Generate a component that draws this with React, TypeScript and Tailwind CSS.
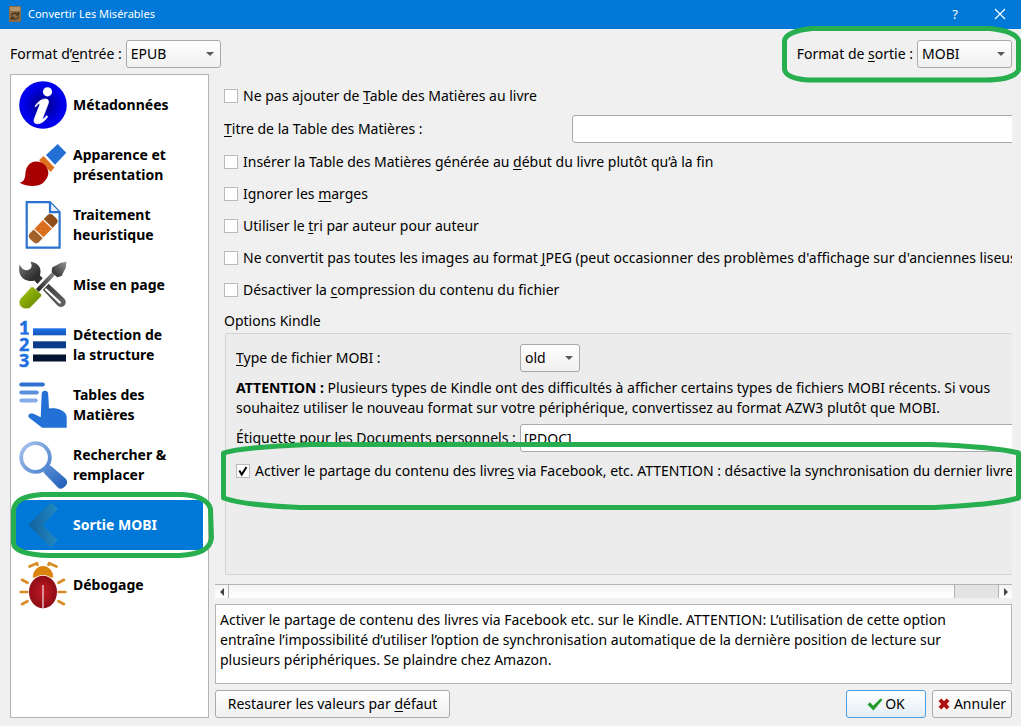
import type { ReactNode } from "react";

/** Renders a caption, underlining the character that follows "&" (its access key). */
function Caption({ text }: { text: string }) {
  const at = text.indexOf("&");
  if (at < 0) return <>{text}</>;
  return (
    <>
      {text.slice(0, at)}
      <u className="underline decoration-1 underline-offset-2">{text[at + 1]}</u>
      {text.slice(at + 2)}
    </>
  );
}

function InfoIcon() {
  return (
    <svg viewBox="0 0 48 48" className="size-12 shrink-0" aria-hidden="true">
      <defs>
        <radialGradient id="info">
          <stop offset="0" stopColor="#00007c" />
          <stop offset="0.85" stopColor="#0000f0" />
          <stop offset="1" stopColor="#0000e6" />
        </radialGradient>
      </defs>
      <circle cx="24" cy="24" r="23.8" fill="url(#info)" />
      <circle cx="28.5" cy="10.8" r="4.6" fill="#fff" />
      <path
        fill="#fff"
        stroke="#fff"
        strokeWidth=".8"
        d="M16 25.500c2.500-4.500 6.500-7.500 10.500-7.500 2.800 0 3.500 2 2.700 4.600l-5.400 14c-.5 1.500.2 1.700 1.200.9 1-.8 1.800-1.800 2.500-2.800l1.200 1c-2.600 4-6.500 7-10.300 7-3.200 0-3.900-2.300-3-5l5.300-13.600c.5-1.500-.5-1.800-1.600-1-.8.6-1.500 1.500-2 2.400z"
      />
    </svg>
  );
}

function BrushIcon() {
  return (
    <svg viewBox="0 0 48 48" className="size-12 shrink-0" aria-hidden="true">
      <path fill="#2370d4" d="M38.700 3l8.600 8.700-11.300 12-9-9.700z" />
      <path fill="#dc701f" d="M24.500 15L35.500 26.500 31.600 31 20 19.300z" />
      <path
        fill="#a80000"
        d="M.7 41.700c4-.7 5.300-4 5.700-8.700.4-6.500 3.600-12.200 10.600-12.500 6.500-.2 11.500 4.500 12.300 10.500.5 4-2 7.500-5.300 11-4.500 3.700-15.500 4.200-23.300-.3z"
      />
    </svg>
  );
}

function BandageIcon() {
  return (
    <svg viewBox="0 0 48 48" className="size-12 shrink-0" aria-hidden="true">
      <defs>
        <linearGradient id="bandage">
          <stop offset="0" stopColor="#a5652c" />
          <stop offset="1" stopColor="#8a4a18" />
        </linearGradient>
      </defs>
      <path fill="#fff" stroke="#2b72d0" strokeWidth="2.200" d="M7.700 1.200h23.200l9.700 10v35.500H7.700z" />
      <path fill="#e8f0fc" stroke="#2b72d0" strokeWidth="2.200" d="M31 1.500v9.700h9.500" />
      <g transform="rotate(-46 24 27.500)">
        <rect x="7.500" y="21.500" width="33" height="12.500" rx="4" fill="url(#bandage)" />
        <rect x="16.800" y="21" width="14.400" height="13.500" fill="#fff" />
        <rect x="18" y="21.500" width="12" height="12.500" fill="#dd7020" />
        <g fill="#c35f1a">
          <circle cx="21.500" cy="25" r=".8" />
          <circle cx="26.500" cy="25" r=".8" />
          <circle cx="24" cy="27.700" r=".8" />
          <circle cx="21.500" cy="30.500" r=".8" />
          <circle cx="26.500" cy="30.500" r=".8" />
        </g>
      </g>
    </svg>
  );
}

function ToolsIcon() {
  return (
    <svg viewBox="0 0 48 48" className="size-12 shrink-0" aria-hidden="true">
      <defs>
        <linearGradient id="wrench" x1="0" y1="0" x2="1" y2="1">
          <stop offset="0" stopColor="#777" />
          <stop offset="0.35" stopColor="#2c2c2c" />
          <stop offset="1" stopColor="#666" />
        </linearGradient>
        <linearGradient id="driver" x1="1" y1="0" x2="0" y2="1">
          <stop offset="0" stopColor="#999" />
          <stop offset="1" stopColor="#1c1c1c" />
        </linearGradient>
        <linearGradient id="handle" x1="0" y1="0" x2="1" y2="1">
          <stop offset="0" stopColor="#a9cc0c" />
          <stop offset="1" stopColor="#5d7d00" />
        </linearGradient>
      </defs>
      <path
        fill="url(#wrench)"
        d="M.8 3.500c1.500 4 4.500 6.500 8 5.500 4-1.200 5-4.500 2.500-8.300 6 .3 10.200 4.300 10.200 9.300 0 1.700-.2 3-.6 4.500l24.300 23c2.300 2.400 1.800 5.500 0 7.200-2 1.700-5 1.600-7-.5L15.300 19.500c-1.500.5-3 .6-4.800.4C5 19.400.500 15 .2 9.700 0 7.300.2 5.300.8 3.500z"
      />
      <path fill="none" stroke="#fff" strokeWidth="2.400" d="M27 28.500l13.800 13" strokeLinecap="round" />
      <path stroke="#fff" strokeWidth="8" d="M16 31.500L36 10" />
      <path stroke="url(#driver)" strokeWidth="4" d="M17 31L37.500 9.500" />
      <path fill="url(#driver)" d="M47.500.8l-6 1.200-8.400 4.500-.4 4.500 5.500 5.300 4.400-1.200 4.200-8.400z" />
      <path
        fill="url(#handle)"
        stroke="#fff"
        strokeWidth=".6"
        d="M12 26.300c1-.8 1.700-.6 2.500 0l7.600 6.700c.8.8.6 1.700 0 2.600L11.500 46.500c-2.500 2-7 1.700-9.500-.7-2.300-2.300-2.600-6 0-8.800z"
      />
    </svg>
  );
}

function NumberedListIcon() {
  return (
    <svg viewBox="0 0 48 48" className="size-12 shrink-0 overflow-visible" aria-hidden="true">
      <defs>
        <linearGradient id="num" x1="0" y1="0" x2="0" y2="1">
          <stop offset="0" stopColor="#1e74ea" />
          <stop offset="1" stopColor="#1554b8" />
        </linearGradient>
      </defs>
      <g fill="#1e6fe0" stroke="#1e6fe0" strokeWidth=".4" fontFamily="'Noto Sans'" fontWeight="700" fontSize="18">
        <text x="0" y="13.300">1</text>
        <text x="0" y="29.700">2</text>
        <text x="0" y="46">3</text>
      </g>
      <rect x="14" y="7.300" width="33" height="7" fill="url(#num)" />
      <rect x="14" y="20.300" width="33" height="7" fill="#0b3c8a" />
      <rect x="14" y="33.500" width="33" height="7" fill="#031432" />
      <path stroke="#1e6fe0" strokeWidth="2.200" d="M1.500 12.500h8.500" />
    </svg>
  );
}

function PointerIcon() {
  return (
    <svg viewBox="0 0 48 48" className="size-12 shrink-0" aria-hidden="true">
      <g strokeWidth="4" strokeLinecap="round">
        <path stroke="#2f70d0" d="M2.300 3.500h21.500" />
        <path stroke="#5b90dd" d="M2.300 11.500h15.500" />
        <path stroke="#86adea" d="M2.300 19.500h14.500" />
      </g>
      <path
        fill="#2370d6"
        d="M22.700 13c0-4.400 6.500-4.400 6.500 0l.8 14.500c5-.5 8.800 0 12 1.500 3.500 1.700 5.700 4 5.700 7.500v10.200H23.200L10.500 37c-2.200-1.700-.9-4.800 2-4.500 1.400.1 2.300.3 3.500.9l5.700 2.800z"
      />
    </svg>
  );
}

function MagnifierIcon() {
  return (
    <svg viewBox="0 0 48 48" className="size-12 shrink-0" aria-hidden="true">
      <defs>
        <linearGradient id="lens" x1="0" y1="0" x2="1" y2="1">
          <stop offset="0" stopColor="#a9c4ec" />
          <stop offset="1" stopColor="#4780cc" />
        </linearGradient>
        <linearGradient id="grip" x1="0" y1="0" x2="1" y2="1">
          <stop offset="0" stopColor="#5c90d6" />
          <stop offset="1" stopColor="#1d5bb8" />
        </linearGradient>
      </defs>
      <circle cx="16.500" cy="16.500" r="14.300" fill="#fff" stroke="url(#lens)" strokeWidth="3.800" />
      <path fill="url(#grip)" d="M24.500 31.500l1-4.300 2-1.800 4-.8L46.500 37.500c2 2 2.200 4.700.3 7.100-2.300 3-5.600 4.200-7.900 1.900z" />
    </svg>
  );
}

function ChevronIcon() {
  return (
    <svg viewBox="0 0 48 48" className="size-12 shrink-0" aria-hidden="true">
      <defs>
        <linearGradient id="chev">
          <stop offset="0" stopColor="#12619b" />
          <stop offset="1" stopColor="#2289c3" />
        </linearGradient>
      </defs>
      <path fill="url(#chev)" d="M32 1.300L39 8 23.700 24l14.900 15.500-7 7.200L9.700 24z" />
    </svg>
  );
}

function BugIcon() {
  return (
    <svg viewBox="0 0 48 48" className="size-12 shrink-0" aria-hidden="true">
      <defs>
        <radialGradient id="bug">
          <stop offset="0" stopColor="#c01a24" />
          <stop offset="1" stopColor="#8f0d16" />
        </radialGradient>
      </defs>
      <g fill="none" stroke="#d98b26" strokeWidth="2.700" strokeLinecap="round" strokeLinejoin="round">
        <path d="M10.500 5.500l7.500-3.300.5 1.600M37.500 5.500L30 2.200l-.5 1.600" />
        <path d="M3 18.800l5.500 3M45 18.800l-5.500 3M1.700 31h6.800M46.300 31h-6.800M3 43.200l5.500-3M45 43.200l-5.500-3" />
      </g>
      <path fill="#dc850e" d="M13.700 16.500a10.300 11.500 0 0 1 20.600 0z" />
      <ellipse cx="24" cy="31" rx="14.500" ry="17" fill="#fff" />
      <ellipse cx="24" cy="31" rx="14" ry="16.300" fill="url(#bug)" />
      <path stroke="#e6b9bb" strokeWidth="1.500" d="M24 24v23.500" />
    </svg>
  );
}

function AppIcon() {
  return (
    <svg viewBox="0 0 12 16" className="h-4 w-3 shrink-0" aria-hidden="true">
      <rect width="12" height="16" rx="1" fill="#8c6a42" />
      <rect x="1" y="1" width="10" height="4" fill="#b09468" />
      <g fill="none" stroke="#3a2f20" strokeWidth="1.200">
        <path d="M2.300 9.500C2.800 7 7 6 9 8.500M9.500 6v3H6.700M9.700 10.700c-.5 2.500-4.700 3.300-6.700 1M2.500 14v-2.700h2.700" />
      </g>
    </svg>
  );
}

interface Section {
  lines: string[];
  icon: ReactNode;
  active?: boolean;
}

const sections: Section[] = [
  { lines: ["Métadonnées"], icon: <InfoIcon /> },
  { lines: ["Apparence et", "présentation"], icon: <BrushIcon /> },
  { lines: ["Traitement", "heuristique"], icon: <BandageIcon /> },
  { lines: ["Mise en page"], icon: <ToolsIcon /> },
  { lines: ["Détection de", "la structure"], icon: <NumberedListIcon /> },
  { lines: ["Tables des", "Matières"], icon: <PointerIcon /> },
  { lines: ["Rechercher &", "remplacer"], icon: <MagnifierIcon /> },
  { lines: ["Sortie MOBI"], icon: <ChevronIcon />, active: true },
  { lines: ["Débogage"], icon: <BugIcon /> },
];

const outputOptions = [
  { id: "start", text: "Insérer la Table des Matières générée au &début du livre plutôt qu’à la fin" },
  { id: "margins", text: "Ignorer les &marges" },
  { id: "sort", text: "Utiliser le &tri par auteur pour auteur" },
  {
    id: "jpeg",
    text: "Ne convertit pas toutes les images au format &JPEG (peut occasionner des problèmes d'affichage sur d'anciennes liseuses)",
  },
  { id: "compress", text: "Désactiver la &compression du contenu du fichier" },
];

function CheckRow({ id, text, checked = false }: { id: string; text: string; checked?: boolean }) {
  return (
    <div className="flex h-[26px] items-center gap-[5px]">
      <span className="relative size-3.5 shrink-0">
        <input
          id={id}
          type="checkbox"
          defaultChecked={checked}
          className="peer block size-3.5 appearance-none border border-[#b9b9b9] bg-white"
        />
        <svg
          viewBox="0 0 14 14"
          className="pointer-events-none absolute inset-0 hidden size-3.5 peer-checked:block"
          aria-hidden="true"
        >
          <path fill="none" stroke="#000" strokeWidth="2" d="M3.300 6.500l2.400 4L10.500 3" />
        </svg>
      </span>
      <label htmlFor={id}>
        <Caption text={text} />
      </label>
    </div>
  );
}

function Dropdown({ id, value, className }: { id: string; value: string; className: string }) {
  return (
    <div className={`relative h-7 ${className}`}>
      <select
        id={id}
        defaultValue={value}
        className="h-full w-full appearance-none rounded-[3px] border border-[#a9a9a9] bg-linear-to-b from-white to-[#f0f0f0] pl-1"
      >
        <option>{value}</option>
      </select>
      <svg
        viewBox="0 0 8 4"
        className="pointer-events-none absolute top-3 right-[7px] h-1 w-2"
        aria-hidden="true"
      >
        <path fill="#5a5a5a" d="M0 0h8L4 4z" />
      </svg>
    </div>
  );
}

/** Hand-drawn green outline that highlights a zone of the dialog. */
function Ring({ viewBox, d, className }: { viewBox: string; d: string; className: string }) {
  return (
    <svg viewBox={viewBox} className={`pointer-events-none absolute z-10 ${className}`} aria-hidden="true">
      <path fill="none" stroke="#27ae4f" strokeWidth="5" strokeLinejoin="round" d={d} />
    </svg>
  );
}

const buttonBase = "flex h-7 items-center justify-center rounded-[3px] border bg-linear-to-b";

export default function App() {
  return (
    <div className="flex min-h-screen flex-col overflow-hidden bg-[#f0f0f0] font-['Noto_Sans','Open_Sans',sans-serif] text-sm leading-5 text-black">
      <header className="flex h-[29px] items-center bg-[#0078d7] pr-[15px] pb-0.5 pl-[9px] text-white">
        <AppIcon />
        <h1 className="ml-[7px] flex-1 text-[11px]">Convertir Les Misérables</h1>
        <button type="button" aria-label="Aide" className="mr-9 text-[13px]">
          ?
        </button>
        <button type="button" aria-label="Fermer">
          <svg viewBox="0 0 12 12" className="size-3" aria-hidden="true">
            <path stroke="#fff" strokeWidth="1.200" d="M1 1l10 10M11 1L1 11" />
          </svg>
        </button>
      </header>

      <main className="flex flex-1 flex-col gap-1.5 pt-[11px] pr-[9px] pb-2 pl-2.5">
        <div className="flex items-center justify-between">
          <div className="flex items-center gap-1">
            <label htmlFor="input-format">
              <Caption text="Format d’&entrée :" />
            </label>
            <Dropdown id="input-format" value="EPUB" className="w-[95px]" />
          </div>
          <div className="relative flex items-center gap-1">
            <label htmlFor="output-format">
              <Caption text="Format de &sortie :" />
            </label>
            <Dropdown id="output-format" value="MOBI" className="w-[95px]" />
            <Ring
              viewBox="781 25 240 60"
              className="-top-[15px] -right-[9px] h-[60px] w-[240px]"
              d="M812 28.500H990C1006 30 1018 35 1018.500 41V70C1016 76 1005 80 985 80H808C796 79 785 76 784.500 69V41C785 34 797 30 812 28.500Z"
            />
          </div>
        </div>

        <div className="flex flex-1 gap-1.5">
          <nav className="relative w-[199px] shrink-0 border border-[#b4b4b4] bg-white">
            <ul className="flex flex-col gap-2.5 p-[5px]">
              {sections.map((section) => (
                <li key={section.lines[0]}>
                  <button
                    type="button"
                    className={`flex h-[50px] w-full items-center gap-1.5 pl-[3px] text-left font-bold ${
                      section.active ? "bg-[#0078d7] text-white" : ""
                    }`}
                  >
                    {section.icon}
                    <span>
                      {section.lines.map((line) => (
                        <span key={line} className="block">
                          {line}
                        </span>
                      ))}
                    </span>
                  </button>
                </li>
              ))}
            </ul>
            <Ring
              viewBox="11 491 204 68"
              className="top-[416px] left-0 h-[68px] w-[204px]"
              d="M42 494.500H182C198 495 209 501 210.500 509L211.500 538C210 550 199 554 180 555.500H50C28 555 14 551 13.500 543V511C14 500 24 496 42 494.500Z"
            />
          </nav>

          <div className="relative flex min-w-0 flex-1 flex-col">
            <div className="min-h-0 flex-1 overflow-hidden pt-[9px] pb-[9px] pl-[9px] whitespace-nowrap">
              <div className="flex h-full w-[960px] flex-col">
                <div className="flex flex-col gap-1.5">
                  <CheckRow id="no-toc" text="Ne pas ajouter de &Table des Matières au livre" />
                  <div className="flex items-center">
                    <label htmlFor="toc-title" className="w-[348px]">
                      <Caption text="&Titre de la Table des Matières :" />
                    </label>
                    <input
                      id="toc-title"
                      type="text"
                      className="h-7 flex-1 rounded-[3px] border border-[#a9a9a9] bg-white px-1"
                    />
                  </div>
                  {outputOptions.map((option) => (
                    <CheckRow key={option.id} id={option.id} text={option.text} />
                  ))}
                  <h2 className="h-6 leading-6">Options Kindle</h2>
                </div>
                <section className="ml-px flex flex-1 flex-col gap-1.5 rounded-xs border border-[#d4d4d4] bg-[#ececec] px-2.5 pt-2.5">
                  <div className="flex items-center">
                    <label htmlFor="file-type" className="w-[284px]">
                      <Caption text="&Type de fichier MOBI :" />
                    </label>
                    <Dropdown id="file-type" value="old" className="w-[60px]" />
                  </div>
                  <p>
                    <b>ATTENTION :</b> Plusieurs types de Kindle ont des difficultés à afficher certains types de
                    fichiers MOBI récents. Si vous
                    <br />
                    souhaitez utiliser le nouveau format sur votre périphérique, convertissez au format AZW3 plutôt que
                    MOBI.
                  </p>
                  <div className="flex items-center">
                    <label htmlFor="doc-tag" className="w-[284px]">
                      <Caption text="Étiquette pour les Documents personnels :" />
                    </label>
                    <input
                      id="doc-tag"
                      type="text"
                      defaultValue="[PDOC]"
                      className="h-7 flex-1 rounded-[3px] border border-[#a9a9a9] bg-white px-[3px]"
                    />
                  </div>
                  <CheckRow
                    id="share"
                    checked
                    text="Activer le partage du contenu des livre&s via Facebook, etc. ATTENTION : désactive la synchronisation du dernier livre lu"
                  />
                </section>
              </div>
            </div>

            <div className="flex h-3.5 border-t border-[#b4b4b4] bg-linear-to-b from-[#f4f4f4] to-white">
              <button
                type="button"
                aria-label="Défiler à gauche"
                className="flex w-3.5 items-center justify-center border-r border-[#b4b4b4]"
              >
                <svg viewBox="0 0 4 8" className="h-2 w-1" aria-hidden="true">
                  <path fill="#444" d="M4 0v8L0 4z" />
                </svg>
              </button>
              <div className="flex flex-1 justify-end">
                <div className="w-[45px] border-x border-[#b4b4b4] bg-[#e3e3e3]" />
              </div>
              <button
                type="button"
                aria-label="Défiler à droite"
                className="flex w-[13px] items-center justify-center"
              >
                <svg viewBox="0 0 4 8" className="h-2 w-1" aria-hidden="true">
                  <path fill="#444" d="M0 0v8l4-4z" />
                </svg>
              </button>
            </div>

            <p className="mt-1.5 h-20 border border-[#b4b4b4] bg-white py-[5px] pr-10 pl-1">
              Activer le partage de contenu des livres via Facebook etc. sur le Kindle. ATTENTION: L’utilisation de
              cette option entraîne l’impossibilité d’utiliser l’option de synchronisation automatique de la dernière
              position de lecture sur plusieurs périphériques. Se plaindre chez Amazon.
            </p>

            <div className="mt-1.5 flex gap-1.5">
              <button
                type="button"
                className={`${buttonBase} mr-auto w-[235px] border-[#a9a9a9] from-white to-[#f0f0f0]`}
              >
                <span>
                  <Caption text="Restaurer les valeurs par &défaut" />
                </span>
              </button>
              <button type="button" className={`${buttonBase} w-20 gap-0.5 border-[#4a9ee0] from-white to-[#e3edf6]`}>
                <svg viewBox="0 0 16 16" className="size-4" aria-hidden="true">
                  <path fill="#1f9a2b" d="M.5 8.500L3 6.300l3.200 3.500L13.500 2.500l2 1.300L6.500 14.500z" />
                </svg>
                OK
              </button>
              <button type="button" className={`${buttonBase} w-20 gap-1 border-[#a9a9a9] from-white to-[#f0f0f0]`}>
                <svg viewBox="0 0 12 12" className="size-3" aria-hidden="true">
                  <path
                    fill="#b01010"
                    d="M3.500.500L6 3.300 8.500.500l3 2.500-2.600 3 2.600 3-3 2.500L6 8.700 3.500 11.500l-3-2.500 2.600-3L.500 3z"
                  />
                </svg>
                Annuler
              </button>
            </div>

            <Ring
              viewBox="221 440 800 72"
              className="top-[366px] -right-[9px] h-[72px] w-[800px]"
              d="M310 444.500H930C975 446 1003 449 1018.500 453V498C1003 503 975 505 935 507.500H300C262 506 238 503 223.500 498V453C238 448 270 446 310 444.500Z"
            />
          </div>
        </div>
      </main>
    </div>
  );
}
